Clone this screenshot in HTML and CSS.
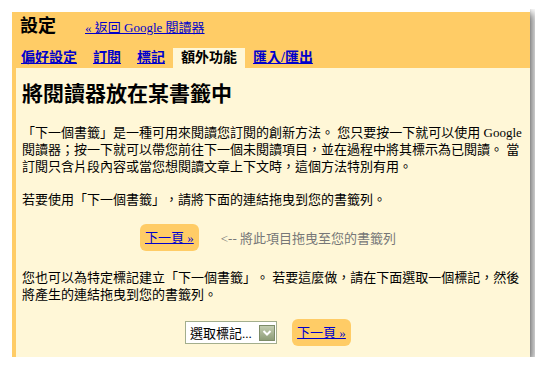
FILE: index.html
```html
<!DOCTYPE html>
<html lang="zh-Hant">
<head>
  <meta charset="UTF-8" />
  <title>設定</title>
  <link rel="stylesheet" href="styles.css">
</head>
<body>
  <div class="window">
    <div class="panel">
      <div class="header">
        <div class="title-row">
          <span class="title">設定</span>
          <a href="#" class="back">« 返回 Google 閱讀器</a>
        </div>
        <ul class="tabs">
          <li><a href="#">偏好設定</a></li>
          <li><a href="#">訂閱</a></li>
          <li><a href="#">標記</a></li>
          <li class="active">額外功能</li>
          <li><a href="#">匯入/匯出</a></li>
        </ul>
      </div>
      <div class="content">
        <h2>將閱讀器放在某書籤中</h2>
        <p>「下一個書籤」是一種可用來閱讀您訂閱的創新方法。 您只要按一下就可以使用 Google 閱讀器；按一下就可以帶您前往下一個未閱讀項目，並在過程中將其標示為已閱讀。 當訂閱只含片段內容或當您想閱讀文章上下文時，這個方法特別有用。</p>
        <p>若要使用「下一個書籤」，請將下面的連結拖曳到您的書籤列。</p>
        <div class="drag-row">
          <a href="#" class="next-btn">下一頁 »</a>
          <span class="hint">&lt;-- 將此項目拖曳至您的書籤列</span>
        </div>
        <p>您也可以為特定標記建立「下一個書籤」。 若要這麼做，請在下面選取一個標記，然後將產生的連結拖曳到您的書籤列。</p>
        <div class="drag-row">
          <div class="picker">
            <span>選取標記...</span>
            <span class="picker-arrow">
              <svg width="10" height="8" viewBox="0 0 10 8"><polyline points="1.5,2 5,5.5 8.5,2" fill="none" stroke="#fff" stroke-width="2"/></svg>
            </span>
          </div>
          <a href="#" class="next-btn">下一頁 »</a>
        </div>
      </div>
    </div>
  </div>
</body>
</html>
```

FILE: styles.css
```css
body {
  margin: 9px;
  background: #fff;
  color: #000;
  font-family: "Liberation Serif", "Noto Sans CJK TC", serif;
  font-size: 13px;
  text-spacing-trim: space-all;
}
a {
  color: #00c;
}
.window {
  width: 521px;
  height: 348px;
  box-sizing: border-box;
  padding: 3px 0 0 3px;
  background: #fff;
  box-shadow: 4px 4px 8px rgba(0, 0, 0, 0.5), 0 0 2px rgba(0, 0, 0, 0.15);
}
.panel {
  height: 100%;
  background: #fc6;
  display: flex;
  flex-direction: column;
}
.header {
  padding-top: 2px;
}
.title-row {
  display: flex;
  align-items: baseline;
  padding-left: 8px;
  height: 24px;
  line-height: 24px;
}
.title {
  font-size: 18px;
  font-weight: bold;
}
.back {
  margin-left: 29px;
}
.tabs {
  list-style: none;
  margin: 10px 0 0;
  padding: 0 0 0 1px;
  display: flex;
}
.tabs li {
  padding: 0 8px;
  line-height: 20px;
  font-size: 14px;
  font-weight: bold;
}
.tabs .active {
  background: #fff7d7;
}
.content {
  flex: 1;
  margin-left: 4px;
  padding: 13px 0 0 6px;
  background: #fff7d7;
}
.content h2 {
  font-size: 21px;
  line-height: 26px;
  margin: 0 0 17px;
}
.content p {
  max-width: 505px;
  margin: 0 0 16px;
  line-height: 17px;
}
.drag-row {
  display: flex;
  align-items: center;
  justify-content: center;
  padding-right: 16px;
  margin: 3px 0 18px;
}
.next-btn {
  background: #fc6;
  border-radius: 6px;
  padding: 0 5px;
  line-height: 27px;
}
.hint {
  margin-left: 22px;
  color: #777;
}
.picker {
  width: 92px;
  height: 23px;
  box-sizing: border-box;
  border: 1px solid #a3ae8d;
  background: #fff;
  display: flex;
  align-items: center;
  justify-content: space-between;
  padding: 0 1px 0 4px;
  margin-right: 15px;
}
.picker-arrow {
  width: 16px;
  height: 16px;
  box-sizing: border-box;
  border: 1px solid #7d8c68;
  background: linear-gradient(#c3cdb1, #8e9d78);
  display: flex;
  align-items: center;
  justify-content: center;
}
```
